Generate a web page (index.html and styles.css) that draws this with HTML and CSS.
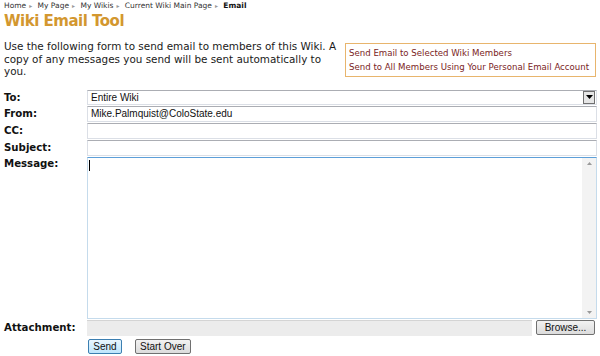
FILE: index.html
```html
<!DOCTYPE html>
<html>
<head>
    <title>Wiki Email Tool</title>
    <link rel="stylesheet" href="styles.css">
</head>
<body>
    <div class="crumbs">
        <a href="#">Home</a><span class="sep">&#9656;</span>
        <a href="#">My Page</a><span class="sep">&#9656;</span>
        <a href="#">My Wikis</a><span class="sep">&#9656;</span>
        <a href="#">Current Wiki Main Page</a><span class="sep">&#9656;</span>
        <b>Email</b>
    </div>
    <h1 class="title">Wiki Email Tool</h1>

    <div class="intro">
        <p>Use the following form to send email to members of this Wiki. A copy of any messages you send will be sent automatically to you.</p>
        <div class="box">
            <a href="#">Send Email to Selected Wiki Members</a>
            <a href="#">Send to All Members Using Your Personal Email Account</a>
        </div>
    </div>

    <form class="mail-form">
        <label class="lbl">To:</label>
        <div class="select">
            <span>Entire Wiki</span>
            <span class="drop">
                <svg width="7" height="4" viewBox="0 0 7 4"><path d="M0 0h7L3.5 4z" fill="#000"/></svg>
            </span>
        </div>

        <label class="lbl">From:</label>
        <input class="field" type="text" value="Mike.Palmquist@ColoState.edu">

        <label class="lbl">CC:</label>
        <input class="field" type="text">

        <label class="lbl">Subject:</label>
        <input class="field" type="text">

        <label class="lbl lbl-top">Message:</label>
        <div class="message">
            <div class="msg-text"><span class="caret"></span></div>
            <div class="scroll">
                <svg width="5" height="3" viewBox="0 0 5 3"><path d="M0 3h5L2.5 0z" fill="#9a9a9a"/></svg>
                <svg width="5" height="3" viewBox="0 0 5 3"><path d="M0 0h5L2.5 3z" fill="#9a9a9a"/></svg>
            </div>
        </div>

        <label class="lbl">Attachment:</label>
        <div class="file">
            <div class="file-path"></div>
            <button type="button" class="btn browse">Browse...</button>
        </div>

        <div></div>
        <div class="actions">
            <button type="button" class="btn send">Send</button>
            <button type="button" class="btn">Start Over</button>
        </div>
    </form>
</body>
</html>
```

FILE: styles.css
```css
body {
    font-family: "DejaVu Sans", Verdana, sans-serif;
    color: #222;
    background-color: #fff;
    margin: 0;
    padding: 0 4px;
}
a {
    color: inherit;
    text-decoration: none;
}
.crumbs {
    font-size: 7.5px;
    line-height: 10px;
    padding-top: 1px;
    color: #333;
}
.crumbs .sep {
    color: #999;
    font-size: 6px;
    margin: 0 3px;
}
.crumbs b {
    color: #111;
}
.title {
    font-size: 15px;
    letter-spacing: -0.5px;
    line-height: 20px;
    color: #d3972f;
    margin: 0;
}
.intro {
    display: flex;
    align-items: flex-start;
    margin-top: 9px;
}
.intro p {
    width: 336px;
    margin: 0;
    font-size: 10.4px;
    line-height: 12.5px;
    color: #1a1a1a;
}
.box {
    margin-left: auto;
    margin-top: 3px;
    width: 244px;
    border: 1px solid #e8b56d;
    padding: 2px 2px 2px 3px;
    display: flex;
    flex-direction: column;
}
.box a {
    color: #7a2424;
    font-size: 8.6px;
    line-height: 14px;
}
.mail-form {
    display: grid;
    grid-template-columns: 83px 510px;
    row-gap: 1px;
    margin-top: 12px;
}
.lbl {
    font-weight: bold;
    font-size: 10.2px;
    color: #111;
    align-self: center;
}
.lbl-top {
    align-self: start;
    padding-top: 1px;
}
.select,
.field {
    height: 15px;
    box-sizing: border-box;
    border: 1px solid #dbdfe6;
    border-top-color: #abadb3;
    font-family: "Liberation Sans", Arial, sans-serif;
    font-size: 10px;
    color: #111;
    padding: 0 3px;
    margin: 0;
    outline: none;
}
.field {
    height: 16px;
}
.select {
    display: flex;
    align-items: center;
    justify-content: space-between;
    padding-right: 1px;
}
.drop {
    width: 10px;
    height: 11px;
    border: 1px solid #707070;
    background-color: #e6e6e6;
    display: flex;
    align-items: center;
    justify-content: center;
}
.message {
    height: 162px;
    box-sizing: border-box;
    border: 1px solid #c5dbec;
    border-top-color: #5d9fd8;
    display: flex;
}
.msg-text {
    flex: 1;
    padding: 2px 1px;
}
.caret {
    display: block;
    width: 1px;
    height: 11px;
    background-color: #000;
}
.scroll {
    width: 14px;
    background-color: #f3f3f3;
    display: flex;
    flex-direction: column;
    justify-content: space-between;
    align-items: center;
    padding: 4px 0;
}
.file {
    display: flex;
    align-items: center;
    height: 16px;
    gap: 4px;
}
.file-path {
    flex: 1;
    height: 16px;
    background-color: #ececec;
    border-top: 1px solid #d4d4d4;
    box-sizing: border-box;
}
.btn {
    font-family: "Liberation Sans", Arial, sans-serif;
    font-size: 10px;
    height: 15px;
    padding: 0 4px;
    border: 1px solid #707070;
    border-radius: 2px;
    background: linear-gradient(#f2f2f2, #dcdcdc);
    color: #111;
    line-height: 13px;
}
.browse {
    width: 59px;
    margin-right: 2px;
}
.actions {
    display: flex;
    gap: 13px;
    margin-top: 2px;
    padding-left: 1px;
}
.send {
    width: 34px;
    border-color: #3c7fb1;
    background: linear-gradient(#eaf6fd, #bee6fd);
}
```
